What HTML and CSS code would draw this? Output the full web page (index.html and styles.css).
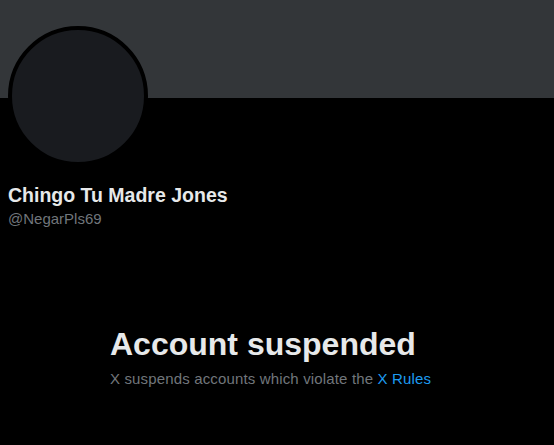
FILE: index.html
```html
<!DOCTYPE html>
<html>
<head>
<meta charset="utf-8">
<link rel="stylesheet" href="styles.css">
</head>
<body>
<div class="banner"></div>
<div class="profile">
  <div class="avatar"></div>
  <div class="names">
    <div class="name">Chingo Tu Madre Jones</div>
    <div class="handle">@NegarPls69</div>
  </div>
</div>
<div class="notice">
  <h1 class="title">Account suspended</h1>
  <p class="desc">X suspends accounts which violate the <a class="link" href="#">X Rules</a></p>
</div>
</body>
</html>
```

FILE: styles.css
```css
html, body {
  margin: 0;
  padding: 0;
  background: #000;
  height: 100%;
  overflow: hidden;
}
body {
  font-family: "Liberation Sans", Arial, sans-serif;
  color: #e7e9ea;
}
.banner {
  height: 98px;
  background: #333639;
}
.profile {
  padding: 0 8px;
}
.avatar {
  width: 132px;
  height: 132px;
  margin-top: -72px;
  border: 4px solid #000;
  border-radius: 50%;
  background: #191b1f;
}
.names {
  margin-top: 17px;
}
.name {
  font-size: 19.5px;
  font-weight: 700;
  line-height: 24px;
}
.handle {
  margin-top: 2px;
  font-size: 15px;
  line-height: 20px;
  color: #71767b;
}
.notice {
  margin: 97px 0 0 110px;
}
.title {
  margin: 0;
  font-size: 32px;
  font-weight: 700;
  line-height: 36px;
}
.desc {
  margin: 7px 0 0;
  font-size: 15px;
  line-height: 20px;
  letter-spacing: 0.15px;
  color: #71767b;
}
.link {
  color: #1d9bf0;
  text-decoration: none;
}
```
